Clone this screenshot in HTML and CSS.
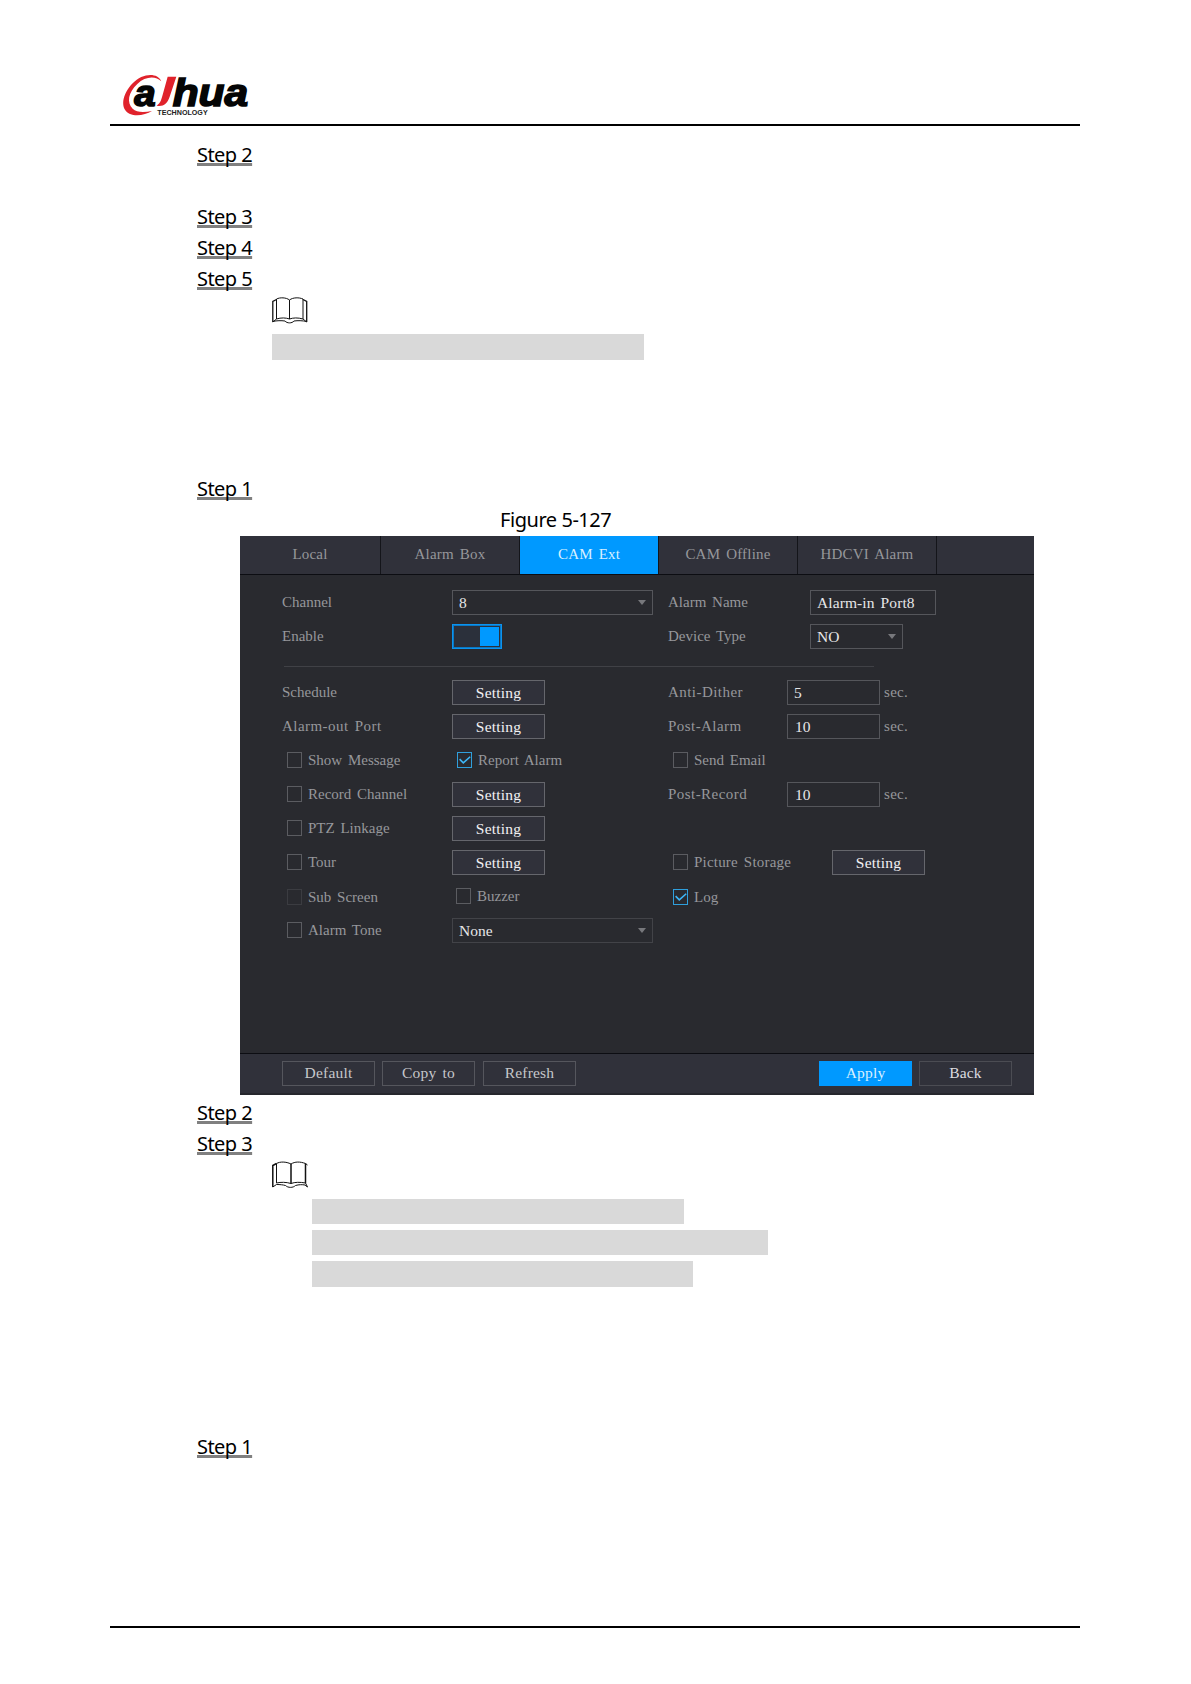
FILE: index.html
```html
<!DOCTYPE html>
<html lang="en">
<head>
    <meta charset="UTF-8">
    <meta name="viewport" content="width=device-width, initial-scale=1.0">
    <title>CAM Ext Alarm</title>
    <link rel="stylesheet" href="styles.css">
</head>
<body>

    <div class="page">
        <header class="page-header">
            <svg class="logo" width="132" height="46" viewBox="60 36 396 138">
                <path d="M184 64 C172 36 126 40 98 70 C66 102 58 148 90 162 C110 170 138 164 156 153 C132 157 110 158 98 146 C80 128 84 98 112 72 C136 48 168 48 184 64 Z" fill="#e0222b"/>
                <path d="M203 50 H229 L209 110 C201 133 190 140 170 137 C182 128 184 118 188 104 Z" fill="#e0222b"/>
                <g class="logo-text">
                    <text x="103" y="137" font-size="112" textLength="64" lengthAdjust="spacingAndGlyphs">a</text>
                    <text x="218" y="137" font-size="118" textLength="226" lengthAdjust="spacingAndGlyphs">hua</text>
                </g>
                <text class="logo-sub" x="172" y="165" font-size="19" textLength="151" lengthAdjust="spacingAndGlyphs">TECHNOLOGY</text>
            </svg>
        </header>

        <main class="content">
            <p class="step skip-line"><span>Step 2</span></p>
            <p class="step"><span>Step 3</span></p>
            <p class="step"><span>Step 4</span></p>
            <p class="step"><span>Step 5</span></p>

            <div class="note">
                <svg class="book" width="36" height="27" viewBox="0 0 36 27">
                    <path d="M.8 25V4.500L4.500 2.500M34.700 25V4.500L31 2.500" stroke-width="1.300"/>
                    <path d="M4.500 22V2C8 .3 14 .3 17.500 3C21 .3 27 .3 31 2V22M17.500 3V22M4.500 22C9 20.500 14 20.700 17.500 22C21 20.700 26 20.500 31 22M.8 25L4.500 22M34.700 25L31 22M.8 24.500C5 23.500 9 23.500 13 24C15 26.500 20 26.500 22 24C26 23.500 30 23.500 34.700 24.500"/>
                </svg>
                <div class="highlight first"></div>
            </div>

            <p class="step section-start"><span>Step 1</span></p>
            <p class="caption">Figure 5-127</p>

            <div class="panel">
                <nav class="tabs">
                    <div class="tab">Local</div>
                    <div class="tab">Alarm Box</div>
                    <div class="tab active">CAM Ext</div>
                    <div class="tab">CAM Offline</div>
                    <div class="tab">HDCVI Alarm</div>
                    <div class="tab-rest"></div>
                </nav>

                <div class="form">
                    <div class="row">
                        <div>Channel</div>
                        <div><div class="field select wide">8</div></div>
                        <div class="pair name"><label>Alarm Name</label><div class="field long">Alarm-in Port8</div></div>
                    </div>
                    <div class="row">
                        <div>Enable</div>
                        <div><div class="toggle"></div></div>
                        <div class="pair name"><label>Device Type</label><div class="field select">NO</div></div>
                    </div>
                    <hr>
                    <div class="row">
                        <div>Schedule</div>
                        <div><button>Setting</button></div>
                        <div class="pair"><label class="dash">Anti-Dither</label><div class="field">5</div><span class="unit">sec.</span></div>
                    </div>
                    <div class="row">
                        <div class="dash">Alarm-out Port</div>
                        <div><button>Setting</button></div>
                        <div class="pair"><label class="dash">Post-Alarm</label><div class="field num">10</div><span class="unit">sec.</span></div>
                    </div>
                    <div class="row">
                        <div class="check"><i></i>Show Message</div>
                        <div class="check report"><i class="on"><svg viewBox="0 0 16 16"><path d="M2 7L6.500 11.500L15 4"/></svg></i>Report Alarm</div>
                        <div class="check"><i></i>Send Email</div>
                    </div>
                    <div class="row">
                        <div class="check"><i></i>Record Channel</div>
                        <div><button>Setting</button></div>
                        <div class="pair"><label class="dash">Post-Record</label><div class="field num">10</div><span class="unit">sec.</span></div>
                    </div>
                    <div class="row">
                        <div class="check"><i></i>PTZ Linkage</div>
                        <div><button>Setting</button></div>
                    </div>
                    <div class="row">
                        <div class="check"><i></i>Tour</div>
                        <div><button>Setting</button></div>
                        <div class="pair storage"><div class="check"><i></i>Picture Storage</div><button>Setting</button></div>
                    </div>
                    <div class="row">
                        <div class="check"><i class="off"></i>Sub Screen</div>
                        <div class="check buzzer"><i></i>Buzzer</div>
                        <div class="check"><i class="on"><svg viewBox="0 0 16 16"><path d="M2 7L6.500 11.500L15 4"/></svg></i>Log</div>
                    </div>
                    <div class="row">
                        <div class="check"><i></i>Alarm Tone</div>
                        <div><div class="field select wide dim">None</div></div>
                    </div>
                </div>

                <div class="actions">
                    <button>Default</button>
                    <button>Copy to</button>
                    <button>Refresh</button>
                    <button class="primary">Apply</button>
                    <button class="back">Back</button>
                </div>
            </div>

            <p class="step after-panel"><span>Step 2</span></p>
            <p class="step"><span>Step 3</span></p>

            <div class="note second">
                <svg class="book" width="36" height="27" viewBox="0 0 36 27">
                    <path d="M.8 26V4.500L4.500 2.500" stroke-width="1.500"/>
                    <path d="M19 3V22.500M33.500 2.500V22" stroke-width="1.500"/>
                    <path d="M4.500 22V2.500C8 .5 14 .5 19 3C23 .5 28 .5 33.500 2.500L35.500 4M4.500 22C9 21 14 21 19 22.500C23 21 28 21 33.500 22M.8 26L4.500 23.500C8 23.500 11 23.800 13.500 24.500C16 27 21 27 23.500 24.500C27 23.500 30 23.500 33 24L35.500 26L33.500 22"/>
                </svg>
                <div class="highlight-list">
                    <div class="highlight short"></div>
                    <div class="highlight long"></div>
                    <div class="highlight medium"></div>
                </div>
            </div>

            <p class="step last"><span>Step 1</span></p>
        </main>

        <footer class="page-footer"></footer>
    </div>

</body>
</html>
```
FILE: styles.css
```css
* {
    margin: 0;
    padding: 0;
    box-sizing: border-box;
}

body {
    background-color: #fff;
    color: #000;
    font-family: 'Noto Sans', 'Open Sans', sans-serif;
    font-size: 20px;
}

.page {
    width: 1191px;
    height: 1684px;
    padding: 0 111px 56px 110px;
    display: flex;
    flex-direction: column;
}

.page-header {
    height: 126px;
    padding: 72px 0 0 10px;
    border-bottom: 2px solid #000;
}

.page-footer {
    border-bottom: 2px solid #000;
}

.logo {
    display: block;
    overflow: visible;
}

.logo-text {
    font-family: 'Liberation Sans', sans-serif;
    font-weight: bold;
    font-style: italic;
    fill: #050505;
    stroke: #050505;
    stroke-width: 5;
}

.logo-sub {
    font-family: 'Liberation Sans', sans-serif;
    font-weight: bold;
    fill: #222;
}

.content {
    flex: 1;
    padding-top: 13px;
}

/* Steps */
.step {
    height: 31px;
    line-height: 31px;
    padding-left: 87px;
    letter-spacing: -0.55px;
    white-space: nowrap;
}

.step span {
    text-decoration: underline;
    text-decoration-color: #808080;
    text-decoration-thickness: 3px;
    text-decoration-skip-ink: none;
    text-underline-offset: 1px;
}

.skip-line {
    margin-bottom: 31px;
}

.section-start {
    margin-top: 113px;
}

.after-panel {
    margin-top: 2px;
}

.last {
    margin-top: 144px;
}

.caption {
    height: 32px;
    line-height: 31px;
    padding-left: 390px;
    letter-spacing: -0.45px;
}

/* Notes */
.note {
    padding: 3px 0 0 162px;
}

.note.second {
    padding-top: 2px;
}

.book {
    display: block;
    fill: none;
    stroke: #111;
    stroke-width: 1;
}

.highlight {
    height: 25px;
    background-color: #d9d9d9;
}

.highlight.first {
    width: 372px;
    height: 26px;
    margin-top: 10px;
}

.highlight-list {
    display: flex;
    flex-direction: column;
    gap: 6px;
    padding: 11px 0 0 40px;
}

.highlight.short {
    width: 372px;
}

.highlight.long {
    width: 456px;
}

.highlight.medium {
    width: 381px;
    height: 26px;
}

/* Device screen */
.panel {
    width: 794px;
    height: 559px;
    margin-left: 130px;
    display: flex;
    flex-direction: column;
    background-color: #292a2f;
    color: #96979b;
    font-family: 'Liberation Serif', serif;
    font-size: 15px;
    word-spacing: 2px;
}

.tabs {
    display: flex;
    height: 39px;
    background-color: #30313a;
    border-bottom: 1px solid #0c0d12;
}

.tab {
    width: 139px;
    line-height: 37px;
    text-align: center;
    border-right: 1px solid #14151a;
    letter-spacing: 0.2px;
}

.tab:first-child {
    width: 141px;
}

.tab.active {
    background-color: #0099ff;
    color: #d9f0ff;
}

.form {
    flex: 1;
    display: flex;
    flex-direction: column;
    gap: 9px;
    padding: 15px 0 0 42px;
}

.row {
    display: grid;
    grid-template-columns: 170px 216px 1fr;
    height: 25px;
    line-height: 24px;
    white-space: nowrap;
}

hr {
    width: 590px;
    margin: 8px 0 4px 2px;
    border: none;
    border-top: 1px solid #404146;
}

.dash {
    letter-spacing: 0.45px;
}

.pair {
    display: flex;
}

.pair label {
    width: 119px;
}

.pair.name label {
    width: 142px;
}

.pair.storage .check {
    width: 164px;
    letter-spacing: 0.2px;
}

.unit {
    margin-left: 4px;
    letter-spacing: 0.3px;
}

.field {
    position: relative;
    width: 93px;
    height: 25px;
    line-height: 23px;
    padding-left: 6px;
    border: 1px solid #55565b;
    color: #e6e6e8;
    font-size: 15.5px;
}

.field.num {
    padding-left: 7px;
}

.field.wide {
    width: 201px;
}

.field.long {
    width: 126px;
    letter-spacing: 0.1px;
}

.field.dim {
    border-color: #424348;
}

.select::after {
    content: "";
    position: absolute;
    top: 9px;
    right: 6px;
    border: 4px solid transparent;
    border-top: 5px solid #77787c;
    border-bottom: none;
}

.toggle {
    width: 50px;
    height: 25px;
    padding: 2px;
    border: 1px solid #0b93ef;
    outline: 1px solid #0b78c4;
    outline-offset: -2px;
    background-color: #2b303b;
}

.toggle::after {
    content: "";
    display: block;
    width: 19px;
    height: 19px;
    margin: 0 0 0 auto;
    background-color: #0099ff;
}

button {
    display: block;
    width: 93px;
    height: 25px;
    padding-bottom: 2px;
    border: 1px solid #65666c;
    background-color: #30313a;
    color: #f2f2f4;
    font: inherit;
    font-size: 15.5px;
    letter-spacing: 0.2px;
    word-spacing: inherit;
}

.check {
    display: flex;
    align-items: center;
    padding: 0 0 1px 5px;
}

.check i {
    width: 15px;
    height: 16px;
    margin-right: 6px;
    border: 1px solid #5b5c61;
}

.check i.off {
    border-color: #3b3c41;
}

.check i.on {
    border-color: #2f9fdc;
}

.check i svg {
    display: block;
    width: 13px;
    height: 14px;
    fill: none;
    stroke: #3db5f5;
    stroke-width: 2;
}

.check.buzzer {
    padding-left: 4px;
    padding-bottom: 2px;
}

.actions {
    display: flex;
    height: 42px;
    padding: 7px 22px 0 42px;
    background-color: #30313a;
    border-top: 1px solid #0c0d12;
    border-bottom: 2px solid #26272d;
}

.actions button {
    margin-right: 8px;
    color: #c6c7cb;
    border-color: #55565d;
}

.actions button:first-child {
    margin-right: 7px;
}

.actions .primary {
    margin-left: auto;
    margin-right: 7px;
    border-color: #0099ff;
    background-color: #0099ff;
    color: #d9f0ff;
}

.actions .back {
    margin-right: 0;
    color: #dcdce0;
    border-color: #4b4c53;
}
```
